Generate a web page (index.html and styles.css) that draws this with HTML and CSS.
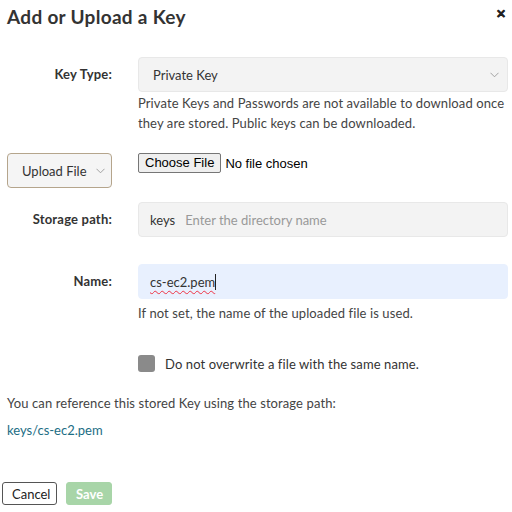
FILE: index.html
```html
<!DOCTYPE html>
<html>
<head>
<meta charset="utf-8">
<link rel="stylesheet" href="styles.css">
</head>
<body>
<div class="dialog">
  <div class="header">
    <h1 class="title">Add or Upload a Key</h1>
    <span class="close">&#x2715;</span>
  </div>

  <div class="row row-keytype">
    <div class="label">Key Type:</div>
    <div class="field">
      <div class="select">
        <span>Private Key</span>
        <svg class="chev" width="9" height="6" viewBox="0 0 9 6"><path d="M0.5 0.8 L4.5 4.8 L8.5 0.8" fill="none" stroke="#999" stroke-width="0.9"/></svg>
      </div>
      <p class="help">Private Keys and Passwords are not available to download once they are stored. Public keys can be downloaded.</p>
    </div>
  </div>

  <div class="row row-upload">
    <div class="label-left">
      <div class="upload-select">
        <span>Upload File</span>
        <svg class="chev" width="9" height="6" viewBox="0 0 9 6"><path d="M0.5 0.8 L4.5 4.8 L8.5 0.8" fill="none" stroke="#999" stroke-width="0.9"/></svg>
      </div>
    </div>
    <div class="field file-field">
      <span class="file-btn">Choose File</span>
      <span class="file-none">No file chosen</span>
    </div>
  </div>

  <div class="row row-storage">
    <div class="label">Storage path:</div>
    <div class="field">
      <div class="input">
        <span class="prefix">keys</span>
        <span class="placeholder">Enter the directory name</span>
      </div>
    </div>
  </div>

  <div class="row row-name">
    <div class="label">Name:</div>
    <div class="field">
      <div class="input input-auto">
        <span class="value">cs-ec2.pem</span><span class="caret"></span>
      </div>
      <p class="help help-name">If not set, the name of the uploaded file is used.</p>
    </div>
  </div>

  <div class="row row-check">
    <div class="label"></div>
    <div class="field check-field">
      <span class="checkbox"></span>
      <span class="check-text">Do not overwrite a file with the same name.</span>
    </div>
  </div>

  <p class="ref">You can reference this stored Key using the storage path:</p>
  <a class="ref-link">keys/cs-ec2.pem</a>

  <div class="actions">
    <button class="btn btn-cancel">Cancel</button>
    <button class="btn btn-save">Save</button>
  </div>
</div>
</body>
</html>
```
FILE: styles.css
```css
* { box-sizing: border-box; }
html, body { margin: 0; padding: 0; background: #fff; }
body {
  font-family: "Lato", "Noto Sans", sans-serif;
  color: #333;
  font-size: 13px;
}
.dialog {
  width: 512px;
  height: 512px;
  padding: 0 4px 0 7px;
}
.header {
  display: flex;
  justify-content: space-between;
  align-items: flex-start;
  height: 57px;
}
.title {
  margin: 5px 0 0 0;
  font-size: 19px;
  font-weight: 700;
  color: #333;
  letter-spacing: 0.3px;
}
.close {
  font-size: 12px;
  font-weight: 700;
  color: #222;
  margin-top: 6px;
  margin-right: 2px;
  -webkit-text-stroke: 0.4px #222;
}
.row {
  display: grid;
  grid-template-columns: 105px 370px;
  column-gap: 26px;
  align-items: start;
}
.label {
  text-align: right;
  font-weight: 700;
  font-size: 13px;
  color: #333;
  line-height: 35px;
  letter-spacing: 0.2px;
}
.select, .input {
  height: 35px;
  background: #f3f3f3;
  border: 1px solid #e8e8e8;
  border-radius: 4px;
  display: flex;
  align-items: center;
  padding: 0 8px 0 14px;
  color: #333;
}
.select { justify-content: space-between; }
.help {
  margin: 1px 0 0 0;
  line-height: 20px;
  color: #444;
  letter-spacing: 0.1px;
}
.row-upload { margin-top: 20px; }
.upload-select {
  width: 105px;
  height: 35px;
  border: 1px solid #b5a58c;
  border-radius: 4px;
  background: #f5f5f5;
  display: flex;
  align-items: center;
  justify-content: space-between;
  padding: 0 6px 0 14px;
  color: #333;
}
.file-field {
  display: flex;
  align-items: center;
  height: 20px;
  font-family: "Liberation Sans", Arial, sans-serif;
  font-size: 13px;
}
.file-btn {
  border: 1px solid #767676;
  background: #efefef;
  border-radius: 2px;
  padding: 1px 6px;
  height: 20px;
  line-height: 16px;
  color: #000;
}
.file-none { margin-left: 4px; color: #000; }
.row-storage { margin-top: 14px; }
.input { padding-left: 11px; }
.prefix { color: #333; margin-right: 10px; }
.placeholder { color: #999; }
.row-name { margin-top: 27px; }
.input-auto {
  background: #e8f0fe;
  border-color: #e8f0fe;
  padding-left: 11px;
}
.value {
  text-decoration: underline wavy #e34;
  text-decoration-thickness: 1px;
  text-underline-offset: 3px;
}
.caret {
  display: inline-block;
  width: 1px;
  height: 16px;
  background: #222;
}
.help-name { margin-top: 4px; }
.row-check { margin-top: 23px; }
.check-field {
  display: flex;
  align-items: center;
  height: 35px;
}
.checkbox {
  width: 17px;
  height: 17px;
  background: #8a8a8a;
  border-radius: 3px;
  margin-right: 10px;
}
.check-text { color: #333; letter-spacing: 0.1px; }
.ref {
  margin: 12px 0 0 0;
  color: #444;
  line-height: 20px;
  letter-spacing: 0.1px;
}
.ref-link {
  display: block;
  margin-top: 7px;
  color: #1c6d84;
  line-height: 20px;
}
.actions {
  display: flex;
  gap: 9px;
  margin-top: 42px;
  margin-left: -5px;
}
.btn {
  font-family: "Lato", "Noto Sans", sans-serif;
  font-size: 13px;
  height: 23px;
  border-radius: 3px;
  padding: 0 9px;
}
.btn-cancel {
  background: #fff;
  border: 1px solid #555;
  color: #222;
  width: 55px;
}
.btn-save {
  background: #a8d5a8;
  border: 1px solid #a8d5a8;
  color: #fff;
  font-weight: 700;
  width: 46px;
}
```
